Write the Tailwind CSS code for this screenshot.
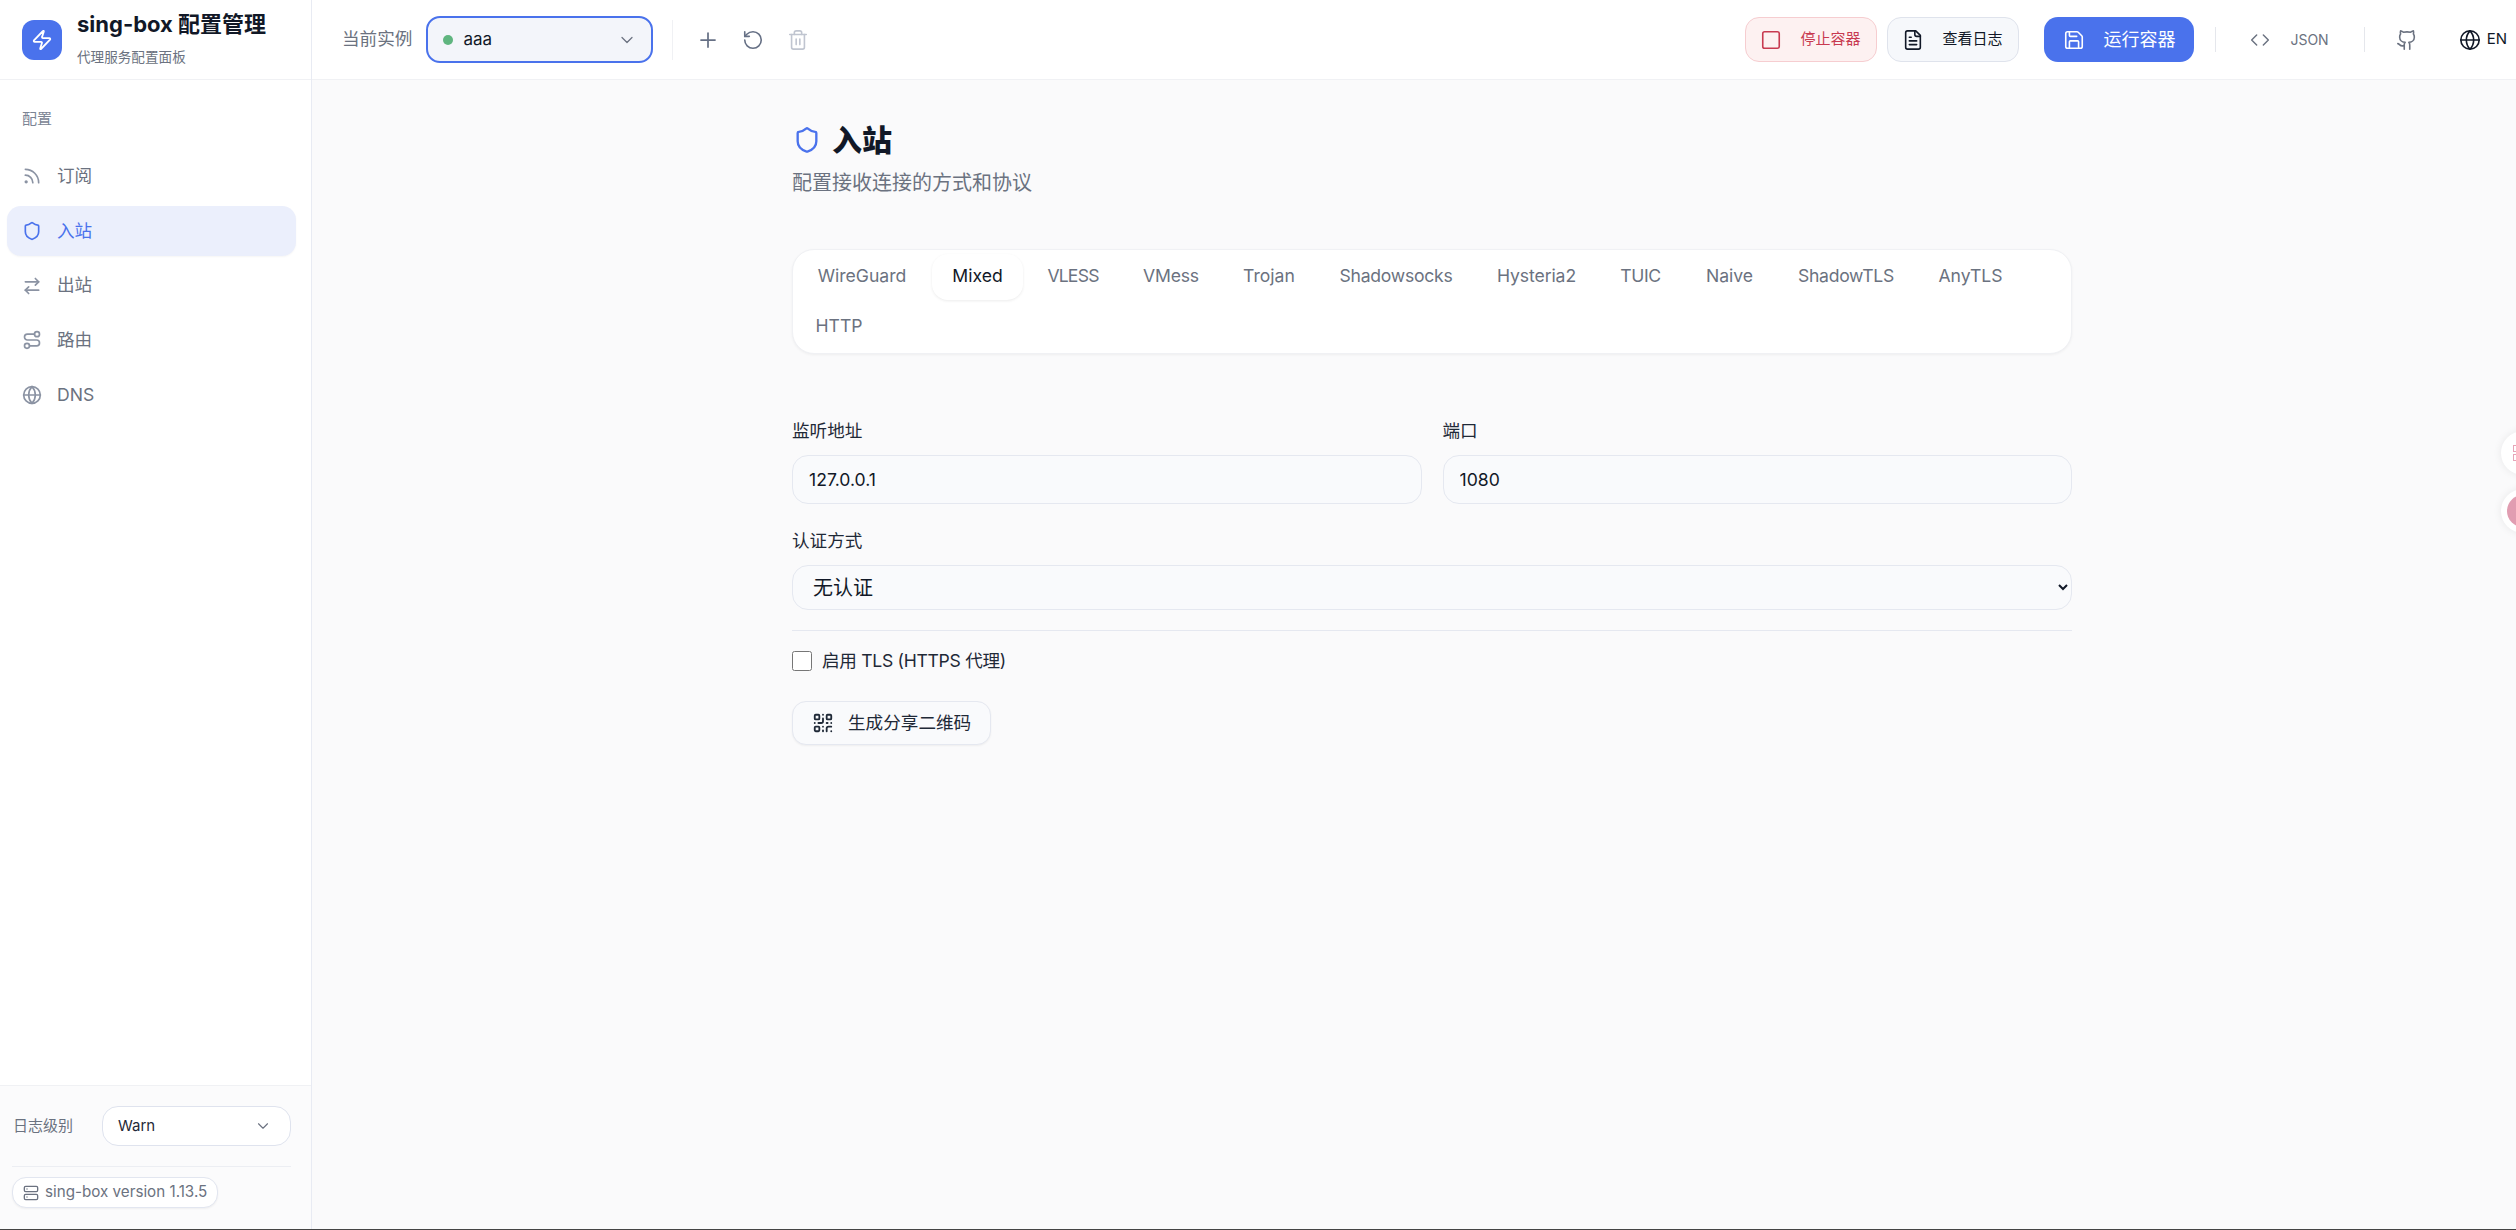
<!DOCTYPE html>
<html lang="zh-CN">
<head>
    <meta charset="UTF-8">
    <title>sing-box 配置管理</title>
    <script src="https://cdn.jsdelivr.net/npm/@tailwindcss/browser@4"></script>
</head>
<body class="relative h-[1230px] w-[2516px] overflow-hidden bg-[#fafafb] font-[family-name:Inter,'Noto_Sans_CJK_SC',sans-serif] text-[#111827]">
    <div class="flex h-[1229px]">
        <!-- Sidebar -->
        <aside class="flex w-[312px] shrink-0 flex-col border-r border-[#e8ebf3] bg-white">
            <div class="flex h-[80px] items-center gap-[15px] border-b border-[#f0f1f4] pl-[22px]">
                <div class="flex h-10 w-10 items-center justify-center rounded-xl bg-[#4a72ec] text-white">
                    <svg class="h-[22px] w-[22px]" viewBox="0 0 24 24" fill="none" stroke="currentColor" stroke-width="2" stroke-linecap="round" stroke-linejoin="round"><path d="M4 14a1 1 0 0 1-.78-1.63l9.9-10.2a.5.5 0 0 1 .86.46l-1.92 6.02A1 1 0 0 0 13 10h7a1 1 0 0 1 .78 1.63l-9.9 10.2a.5.5 0 0 1-.86-.46l1.92-6.02A1 1 0 0 0 11 14z"/></svg>
                </div>
                <div class="-mt-[4px]">
                    <div class="text-[22px] leading-[30px] font-bold text-[#111827]">sing-box 配置管理</div>
                    <div class="mt-[8px] text-[13.6px] leading-[20px] text-[#6b7280]">代理服务配置面板</div>
                </div>
            </div>

            <nav class="flex-1 pt-[28px] pr-[15px] pl-[7px]">
                <div class="px-[15px] text-[15px] leading-[22px] text-[#7b8494]">配置</div>
                <div class="mt-[21px] flex flex-col gap-[4.8px] text-[17.6px] text-[#6b7280]">
                    <a class="flex h-[50px] items-center gap-[15px] rounded-[14px] px-[15px]">
                        <svg class="h-5 w-5 text-[#8b93a3]" viewBox="0 0 24 24" fill="none" stroke="currentColor" stroke-width="2" stroke-linecap="round" stroke-linejoin="round"><path d="M4 11a9 9 0 0 1 9 9"/><path d="M4 4a16 16 0 0 1 16 16"/><circle cx="5" cy="19" r="1"/></svg>
                        订阅
                    </a>
                    <a class="flex h-[50px] items-center gap-[15px] rounded-[14px] bg-[#ebeffc] px-[15px] text-[#4a72ec] shadow-[0_1px_2px_rgba(0,0,0,0.04)]">
                        <svg class="h-5 w-5" viewBox="0 0 24 24" fill="none" stroke="currentColor" stroke-width="2" stroke-linecap="round" stroke-linejoin="round"><path d="M20 13c0 5-3.5 7.5-7.66 8.95a1 1 0 0 1-.67-.01C7.5 20.5 4 18 4 13V6a1 1 0 0 1 1-1c2 0 4.5-1.2 6.24-2.72a1.17 1.17 0 0 1 1.52 0C14.51 3.81 17 5 19 5a1 1 0 0 1 1 1z"/></svg>
                        入站
                    </a>
                    <a class="flex h-[50px] items-center gap-[15px] rounded-[14px] px-[15px]">
                        <svg class="h-5 w-5 text-[#8b93a3]" viewBox="0 0 24 24" fill="none" stroke="currentColor" stroke-width="2" stroke-linecap="round" stroke-linejoin="round"><path d="m16 3 4 4-4 4"/><path d="M20 7H4"/><path d="m8 21-4-4 4-4"/><path d="M4 17h16"/></svg>
                        出站
                    </a>
                    <a class="flex h-[50px] items-center gap-[15px] rounded-[14px] px-[15px]">
                        <svg class="h-5 w-5 text-[#8b93a3]" viewBox="0 0 24 24" fill="none" stroke="currentColor" stroke-width="2" stroke-linecap="round" stroke-linejoin="round"><circle cx="6" cy="19" r="3"/><path d="M9 19h8.5a3.5 3.5 0 0 0 0-7h-11a3.5 3.5 0 0 1 0-7H15"/><circle cx="18" cy="5" r="3"/></svg>
                        路由
                    </a>
                    <a class="flex h-[50px] items-center gap-[15px] rounded-[14px] px-[15px]">
                        <svg class="h-5 w-5 text-[#8b93a3]" viewBox="0 0 24 24" fill="none" stroke="currentColor" stroke-width="2" stroke-linecap="round" stroke-linejoin="round"><circle cx="12" cy="12" r="10"/><path d="M12 2a14.5 14.5 0 0 0 0 20 14.5 14.5 0 0 0 0-20"/><path d="M2 12h20"/></svg>
                        DNS
                    </a>
                </div>
            </nav>

            <div class="h-[144px] border-t border-[#f0f1f4] bg-[#fbfbfc] pt-5 pr-5 pl-3">
                <div class="flex items-center">
                    <span class="ml-px w-[89px] text-[15px] text-[#6b7280]">日志级别</span>
                    <div class="flex h-10 flex-1 items-center justify-between rounded-2xl border border-[#dfe3ee] bg-white pr-[18px] pl-[15px] text-[15px] text-[#1f2937]">
                        Warn
                        <svg class="h-[18px] w-[18px] text-[#6b7280]" viewBox="0 0 24 24" fill="none" stroke="currentColor" stroke-width="1.5" stroke-linecap="round" stroke-linejoin="round"><path d="m6 9 6 6 6-6"/></svg>
                    </div>
                </div>
                <div class="mt-5 h-px bg-[#eceef3]"></div>
                <div class="mt-[10px] inline-flex h-[31px] items-center gap-[6px] rounded-[14px] border border-[#e2e6f0] bg-white px-[10px] text-[15.2px] text-[#6b7280] shadow-[0_1px_2px_rgba(0,0,0,0.05)]">
                    <svg class="h-4 w-4" viewBox="0 0 24 24" fill="none" stroke="currentColor" stroke-width="2" stroke-linecap="round" stroke-linejoin="round"><rect width="20" height="8" x="2" y="2" rx="2"/><rect width="20" height="8" x="2" y="14" rx="2"/><path d="M6 6h.01"/><path d="M6 18h.01"/></svg>
                    sing-box version 1.13.5
                </div>
            </div>
        </aside>

        <div class="flex min-w-0 flex-1 flex-col">
            <!-- Top bar -->
            <header class="flex h-[80px] shrink-0 items-center border-b border-[#f0f1f4] bg-white pr-[9px] pl-[30px]">
                <span class="text-[17.6px] text-[#6b7280]">当前实例</span>
                <div class="ml-[14px] flex h-[47px] w-[227px] items-center rounded-[14px] border-[2.5px] border-[#4a72ec] bg-[#f3f5fa] pr-[14px] pl-[15px]">
                    <span class="h-[10px] w-[10px] rounded-full bg-[#5fb57f]"></span>
                    <span class="ml-[10px] text-[17px] text-[#111827]">aaa</span>
                    <svg class="ml-auto h-5 w-5 text-[#6b7280]" viewBox="0 0 24 24" fill="none" stroke="currentColor" stroke-width="1.5" stroke-linecap="round" stroke-linejoin="round"><path d="m6 9 6 6 6-6"/></svg>
                </div>
                <div class="ml-[19px] h-10 w-px bg-[#f0f1f4]"></div>
                <div class="ml-[17px] flex gap-[9px]">
                    <button class="flex h-9 w-9 items-center justify-center text-[#667085]">
                        <svg class="h-[24px] w-[24px]" viewBox="0 0 24 24" fill="none" stroke="currentColor" stroke-width="1.75" stroke-linecap="round" stroke-linejoin="round"><path d="M5 12h14"/><path d="M12 5v14"/></svg>
                    </button>
                    <button class="flex h-9 w-9 items-center justify-center text-[#667085]">
                        <svg class="h-[22px] w-[22px]" viewBox="0 0 24 24" fill="none" stroke="currentColor" stroke-width="1.75" stroke-linecap="round" stroke-linejoin="round"><path d="M3 12a9 9 0 1 0 9-9 9.75 9.75 0 0 0-6.74 2.74L3 8"/><path d="M3 3v5h5"/></svg>
                    </button>
                    <button class="flex h-9 w-9 items-center justify-center text-[#c0c5d0]">
                        <svg class="h-[22px] w-[22px]" viewBox="0 0 24 24" fill="none" stroke="currentColor" stroke-width="1.75" stroke-linecap="round" stroke-linejoin="round"><path d="M3 6h18"/><path d="M19 6v14c0 1-1 2-2 2H7c-1 0-2-1-2-2V6"/><path d="M8 6V4c0-1 1-2 2-2h4c1 0 2 1 2 2v2"/><path d="M10 11v6"/><path d="M14 11v6"/></svg>
                    </button>
                </div>

                <div class="ml-auto flex items-center">
                    <button class="flex h-[45px] w-[132px] items-center gap-[18px] rounded-[14px] border border-[#f6cdd0] bg-[#fdf1f1] pl-[14px] text-[15px] text-[#c83a50]">
                        <svg class="h-[22px] w-[22px] shrink-0" viewBox="0 0 24 24" fill="none" stroke="currentColor" stroke-width="1.75" stroke-linecap="round" stroke-linejoin="round"><rect width="18" height="18" x="3" y="3" rx="2"/></svg>
                        停止容器
                    </button>
                    <button class="ml-[10px] flex h-[45px] w-[132px] items-center gap-[18px] rounded-[14px] border border-[#dfe3ec] bg-[#f6f8fb] pl-[14px] text-[15px] text-[#111827]">
                        <svg class="h-[22px] w-[22px] shrink-0" viewBox="0 0 24 24" fill="none" stroke="currentColor" stroke-width="1.75" stroke-linecap="round" stroke-linejoin="round"><path d="M15 2H6a2 2 0 0 0-2 2v16a2 2 0 0 0 2 2h12a2 2 0 0 0 2-2V7Z"/><path d="M14 2v4a2 2 0 0 0 2 2h4"/><path d="M10 9H8"/><path d="M16 13H8"/><path d="M16 17H8"/></svg>
                        查看日志
                    </button>
                    <button class="ml-[25px] flex h-[45px] w-[150px] items-center gap-[18px] rounded-[14px] bg-[#4a72ec] pl-[19px] text-[18px] text-white">
                        <svg class="h-[22px] w-[22px] shrink-0" viewBox="0 0 24 24" fill="none" stroke="currentColor" stroke-width="1.75" stroke-linecap="round" stroke-linejoin="round"><path d="M15.2 3a2 2 0 0 1 1.4.6l3.8 3.8a2 2 0 0 1 .6 1.4V19a2 2 0 0 1-2 2H5a2 2 0 0 1-2-2V5a2 2 0 0 1 2-2z"/><path d="M17 21v-7a1 1 0 0 0-1-1H8a1 1 0 0 0-1 1v7"/><path d="M7 3v4a1 1 0 0 0 1 1h7"/></svg>
                        运行容器
                    </button>
                    <div class="ml-[21px] h-[25px] w-px bg-[#e5e7ec]"></div>
                    <button class="ml-[34px] flex items-center gap-[20px] text-[14px] text-[#6b7280]">
                        <svg class="h-5 w-5" viewBox="0 0 24 24" fill="none" stroke="currentColor" stroke-width="1.75" stroke-linecap="round" stroke-linejoin="round"><path d="m16 18 6-6-6-6"/><path d="m8 6-6 6 6 6"/></svg>
                        JSON
                    </button>
                    <div class="ml-[35px] h-[25px] w-px bg-[#e5e7ec]"></div>
                    <svg class="ml-[31px] h-[22px] w-[22px] text-[#6b7280]" viewBox="0 0 24 24" fill="none" stroke="currentColor" stroke-width="1.75" stroke-linecap="round" stroke-linejoin="round"><path d="M15 22v-4a4.8 4.8 0 0 0-1-3.5c3 0 6-2 6-5.5.08-1.25-.27-2.48-1-3.5.28-1.15.28-2.35 0-3.5 0 0-1 0-3 1.5-2.64-.5-5.36-.5-8 0C6 2 5 2 5 2c-.3 1.15-.3 2.35 0 3.5A5.403 5.403 0 0 0 4 9c0 3.5 3 5.5 6 5.5-.39.49-.68 1.05-.85 1.65-.17.6-.22 1.23-.15 1.85v4"/><path d="M9 18c-4.51 2-5-2-7-2"/></svg>
                    <button class="ml-[41px] flex items-center gap-[6px] text-[15px] text-[#111827]">
                        <svg class="h-[22px] w-[22px]" viewBox="0 0 24 24" fill="none" stroke="currentColor" stroke-width="1.75" stroke-linecap="round" stroke-linejoin="round"><circle cx="12" cy="12" r="10"/><path d="M12 2a14.5 14.5 0 0 0 0 20 14.5 14.5 0 0 0 0-20"/><path d="M2 12h20"/></svg>
                        EN
                    </button>
                </div>
            </header>

            <!-- Page -->
            <main class="flex-1 pt-[40px] pl-[480px]">
                <div class="w-[1280px]">
                    <h1 class="flex h-10 items-center gap-[11px] text-[30px] font-black text-[#111827]">
                        <svg class="ml-[1px] h-[28px] w-[28px] text-[#4a72ec]" viewBox="0 0 24 24" fill="none" stroke="currentColor" stroke-width="2" stroke-linecap="round" stroke-linejoin="round"><path d="M20 13c0 5-3.5 7.5-7.66 8.95a1 1 0 0 1-.67-.01C7.5 20.5 4 18 4 13V6a1 1 0 0 1 1-1c2 0 4.5-1.2 6.24-2.72a1.17 1.17 0 0 1 1.52 0C14.51 3.81 17 5 19 5a1 1 0 0 1 1 1z"/></svg>
                        入站
                    </h1>
                    <p class="mt-[9px] text-[20px] leading-[28px] text-[#6b7280]">配置接收连接的方式和协议</p>

                    <div class="mt-[52px] flex flex-wrap gap-1 rounded-[22px] border border-[#f0f1f4] bg-white px-[3px] py-[3.5px] text-center text-[17.6px] text-[#6b7280] shadow-[0_1px_3px_rgba(0,0,0,0.05)]">
                        <button class="h-[46px] w-[132px]">WireGuard</button>
                        <button class="h-[46px] w-[91px] rounded-2xl bg-white text-[#111827] shadow-[0_1px_3px_rgba(0,0,0,0.08)]">Mixed</button>
                        <button class="h-[46px] w-[92px] tracking-[-0.8px]">VLESS</button>
                        <button class="h-[46px] w-[96px] tracking-[-0.2px]">VMess</button>
                        <button class="h-[46px] w-[92px]">Trojan</button>
                        <button class="h-[46px] w-[154px] tracking-[-0.25px]">Shadowsocks</button>
                        <button class="h-[46px] w-[119px] tracking-[-0.1px]">Hysteria2</button>
                        <button class="h-[46px] w-[81px] tracking-[-0.4px]">TUIC</button>
                        <button class="h-[46px] w-[89px]">Naive</button>
                        <button class="h-[46px] w-[136px] tracking-[-0.3px]">ShadowTLS</button>
                        <button class="h-[46px] w-[105px]">AnyTLS</button>
                        <button class="h-[46px] w-[86px]">HTTP</button>
                    </div>

                    <div class="mt-[65px] grid grid-cols-2 gap-x-[21px] text-[17.6px]">
                        <div>
                            <label class="block leading-[24px] text-[#1f2937]">监听地址</label>
                            <input class="mt-3 h-[49px] w-full rounded-2xl border border-[#e5e8f0] bg-[#f9fafc] px-4 text-[#111827]" value="127.0.0.1">
                        </div>
                        <div>
                            <label class="block leading-[24px] text-[#1f2937]">端口</label>
                            <input class="mt-3 h-[49px] w-full rounded-2xl border border-[#e5e8f0] bg-[#f9fafc] px-4 text-[#111827]" value="1080">
                        </div>
                    </div>

                    <label class="mt-[25px] block text-[17.6px] leading-[24px] text-[#1f2937]">认证方式</label>
                    <select class="mt-3 h-[45px] w-full rounded-2xl border border-[#e5e8f0] bg-[#f9fafc] pl-4 text-[20px] text-[#111827]">
                        <option>无认证</option>
                    </select>

                    <div class="mt-5 h-px bg-[#e5e8f0]"></div>

                    <label class="mt-5 flex h-5 items-center gap-[10px] text-[17.6px] tracking-[-0.3px] text-[#1f2937]">
                        <input type="checkbox" class="h-5 w-5">
                        启用 TLS (HTTPS 代理)
                    </label>

                    <button class="mt-[30px] flex h-[44px] w-[199px] items-center gap-[14px] rounded-[14px] border border-[#e5e8f0] bg-[#f9fafc] pl-[19px] text-[17.6px] text-[#1f2937] shadow-[0_1px_2px_rgba(0,0,0,0.05)]">
                        <svg class="h-[22px] w-[22px]" viewBox="0 0 24 24" fill="none" stroke="currentColor" stroke-width="2" stroke-linecap="round" stroke-linejoin="round"><rect width="5" height="5" x="3" y="3" rx="1"/><rect width="5" height="5" x="16" y="3" rx="1"/><rect width="5" height="5" x="3" y="16" rx="1"/><path d="M21 16h-3a2 2 0 0 0-2 2v3"/><path d="M21 21v.01"/><path d="M12 7v3a2 2 0 0 1-2 2H7"/><path d="M3 12h.01"/><path d="M12 3h.01"/><path d="M12 16v.01"/><path d="M16 12h1"/><path d="M21 12v.01"/><path d="M12 21v-1"/></svg>
                        生成分享二维码
                    </button>
                </div>
            </main>
        </div>
    </div>
    <div class="h-px bg-[#444444]"></div>

    <!-- Floating side tools, clipped by the window edge -->
    <div class="absolute top-[431px] -right-[29px] flex h-[44px] w-[44px] items-center justify-start rounded-full bg-white pl-[12px] shadow-[0_0_8px_rgba(0,0,0,0.08)]">
        <div class="flex flex-col gap-[2px]">
            <span class="h-[7px] w-[7px] border border-[#e6a5b8]"></span>
            <span class="h-[7px] w-[7px] border border-[#e6a5b8]"></span>
        </div>
    </div>
    <div class="absolute top-[489px] -right-[29px] flex h-[44px] w-[44px] items-center rounded-full bg-white pl-[6px] shadow-[0_0_8px_rgba(0,0,0,0.08)]">
        <span class="h-[32px] w-[32px] rounded-full bg-[#e19db1]"></span>
    </div>
</body>
</html>
